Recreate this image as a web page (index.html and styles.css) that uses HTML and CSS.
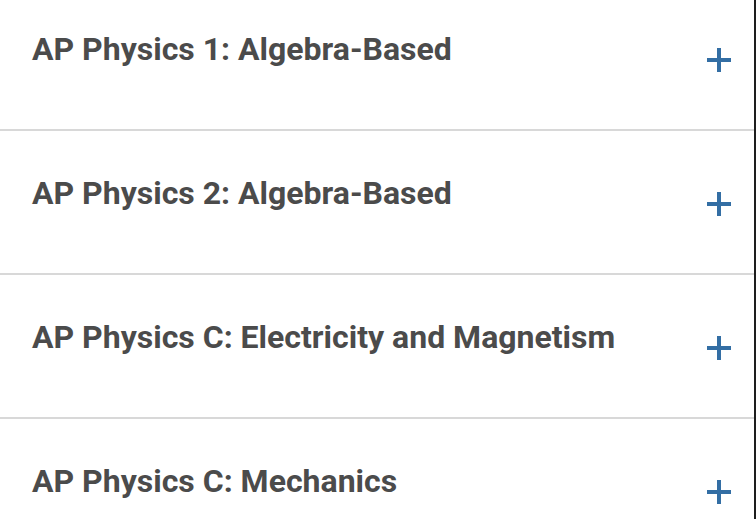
FILE: index.html
```html
<!DOCTYPE html>
<html lang="en">
<head>
  <meta charset="UTF-8" />
  <title>AP Physics</title>
  <link rel="stylesheet" href="styles.css">
</head>
<body>
  <div class="accordion">
    <div class="item">
      <h3>AP Physics 1: Algebra-Based</h3>
      <span class="plus"></span>
    </div>
    <div class="item">
      <h3>AP Physics 2: Algebra-Based</h3>
      <span class="plus"></span>
    </div>
    <div class="item">
      <h3>AP Physics C: Electricity and Magnetism</h3>
      <span class="plus"></span>
    </div>
    <div class="item">
      <h3>AP Physics C: Mechanics</h3>
      <span class="plus"></span>
    </div>
  </div>
</body>
</html>
```

FILE: styles.css
```css
body {
  font-family: Roboto, "Liberation Sans", sans-serif;
  background-color: #fff;
  margin: 0;
  overflow: hidden;
}
.accordion {
  margin-top: -13px;
  width: 754px;
  border-right: 2px solid #1e1e1e;
}
.item {
  height: 142px;
  border-bottom: 2px solid #d8d8d8;
  display: flex;
  align-items: center;
  justify-content: space-between;
  padding: 0 23px 0 32px;
  box-sizing: content-box;
}
.item h3 {
  margin: 0;
  align-self: flex-start;
  padding-top: 42px;
  font-size: 32px;
  line-height: 40px;
  font-weight: 700;
  color: #4b4b4b;
}
.plus {
  position: relative;
  width: 24px;
  height: 24px;
  margin-top: 4px;
}
.plus::before,
.plus::after {
  content: "";
  position: absolute;
  background-color: #336ea4;
}
.plus::before {
  left: 0;
  top: 10px;
  width: 24px;
  height: 4px;
}
.plus::after {
  left: 10px;
  top: 0;
  width: 4px;
  height: 24px;
}
```
